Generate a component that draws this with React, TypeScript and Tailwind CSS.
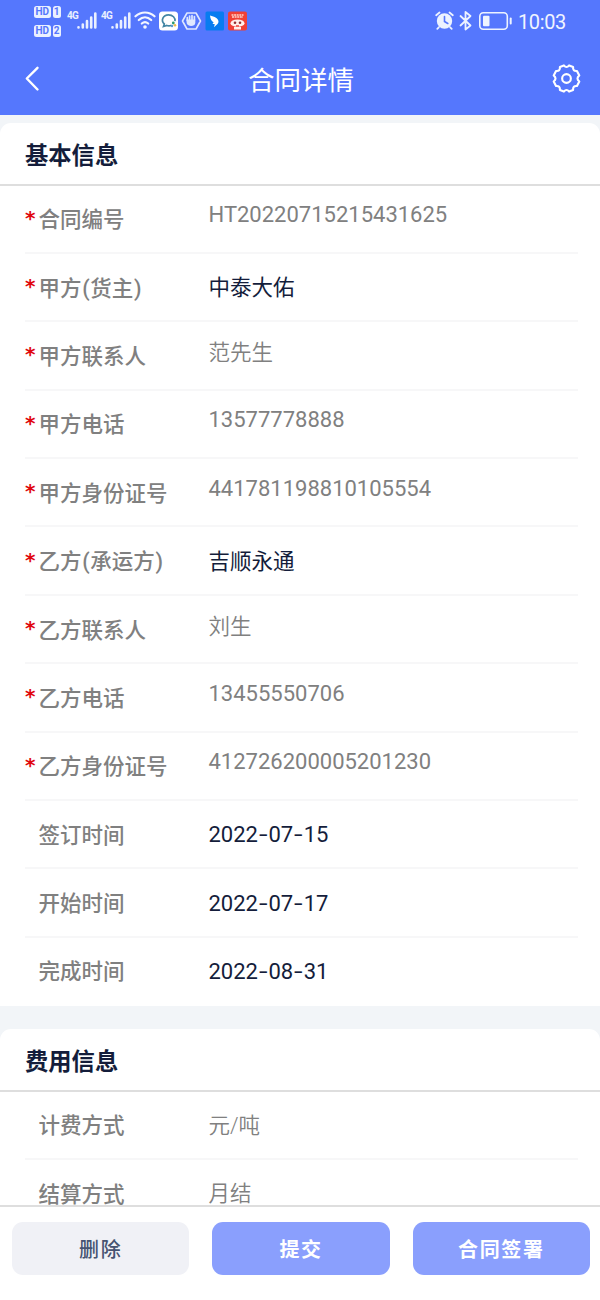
import React from 'react';

type Row = { label: string; value: string; required?: boolean; dark?: boolean; raised?: boolean };

const basicRows: Row[] = [
  { label: '合同编号', value: 'HT20220715215431625', required: true, raised: true },
  { label: '甲方(货主)', value: '中泰大佑', required: true, dark: true },
  { label: '甲方联系人', value: '范先生', required: true, raised: true },
  { label: '甲方电话', value: '13577778888', required: true, raised: true },
  { label: '甲方身份证号', value: '441781198810105554', required: true, raised: true },
  { label: '乙方(承运方)', value: '吉顺永通', required: true, dark: true },
  { label: '乙方联系人', value: '刘生', required: true, raised: true },
  { label: '乙方电话', value: '13455550706', required: true, raised: true },
  { label: '乙方身份证号', value: '412726200005201230', required: true, raised: true },
  { label: '签订时间', value: '2022-07-15', dark: true },
  { label: '开始时间', value: '2022-07-17', dark: true },
  { label: '完成时间', value: '2022-08-31', dark: true },
];

const feeRows: Row[] = [
  { label: '计费方式', value: '元/吨' },
  { label: '结算方式', value: '月结' },
];

function HdBadge({ n }: { n: string }) {
  return (
    <div className="flex h-[11.500px] gap-[2px] text-[10px] font-bold leading-[12px] text-[#5577fd]">
      <span className="w-[16.500px] rounded-[2.5px] bg-[#eaf0ff] text-center">HD</span>
      <span className="w-[8px] rounded-[2.5px] bg-[#eaf0ff] text-center">{n}</span>
    </div>
  );
}

function Signal() {
  return (
    <div className="flex w-[34px]">
      <span className="mt-[3px] w-[10px] text-[10px] font-bold leading-[10px] tracking-[-0.8px] text-[#eaf0ff]">4G</span>
      <svg width="20" height="18" viewBox="0 0 20 18" className="mt-[4px]" stroke="#eaf0ff" strokeWidth="2.600" strokeLinecap="round">
        <path d="M1.500 15.200v.3M5.800 12.500v3M10 9v6.500M14.200 5.500v10M18.300 1.500v14" />
      </svg>
    </div>
  );
}

function StatusBar() {
  return (
    <div className="flex h-[44px] shrink-0 pl-[34px] pr-[34px]">
      <div className="flex flex-col gap-[7.500px] pt-[6px]">
        <HdBadge n="1" />
        <HdBadge n="2" />
      </div>
      <div className="ml-[6.500px] flex pt-[8px]">
        <Signal />
        <Signal />
      </div>
      <svg width="114" height="24" viewBox="0 0 114 24" className="-ml-[1px] mt-[9px]" fill="none">
        <g stroke="#f3f6ff" strokeWidth="2.200" strokeLinecap="round">
          <path d="M1.500 7.300C7 2.200 15 2.200 20.500 7.300" />
          <path d="M4.800 11C8.500 7.600 13.500 7.600 17.200 11" />
          <path d="M7.800 14.500C9.800 12.800 12.200 12.800 14.200 14.500" />
        </g>
        <circle cx="11" cy="18" r="1.800" fill="#f3f6ff" />
        <rect x="25" y="2.500" width="19" height="19" rx="3.500" fill="#fff" />
        <path d="M37.500 16.300c-1.500.7-3.300.7-4.700.2L29.500 17.500l.8-2.500c-3.800-3.500-1.300-9.200 4.200-9.200 4.200 0 7 3 6.500 6.400" stroke="#4386a4" strokeWidth="1.700" />
        <circle cx="39.300" cy="14" r="1.400" fill="#2a9b70" />
        <circle cx="41" cy="16.300" r="1.300" fill="#f0b84a" />
        <circle cx="38" cy="17" r="1.200" fill="#5a9bd4" />
        <path d="M53 4h9l4.500 8-4.500 8h-9l-4.500-8z" stroke="#dfe8ff" strokeWidth="1.600" strokeLinejoin="round" />
        <path d="M53.300 11.500v-3M55.600 11V7M58 11V6.500M60.400 11V7.500" stroke="#dfe8ff" strokeWidth="1.700" strokeLinecap="round" />
        <path d="M52.500 10.500h8.800v3.200c0 4-7.300 4.500-8.600.5z" fill="#dfe8ff" />
        <rect x="71.500" y="2.500" width="18.500" height="19" rx="1.500" fill="#087cf0" />
        <path d="M76 6.500c4.500 1 8.500 2.800 8.500 6.300 0 1.600-1.800 3-4.400 5.400l.6-3.200-2.200-.1 1.100-1.700c-2.200-1-3.300-3.500-3.600-6.700z" fill="#fff" />
        <rect x="94" y="2.500" width="19" height="19" rx="2" fill="#ef4036" />
        <path d="M97.500 6h12M98 8.100h11" stroke="#ffd5cc" strokeWidth="1.500" strokeDasharray="2 .6" />
        <ellipse cx="103.500" cy="14.200" rx="7" ry="3.700" fill="#fff0ea" />
        <path d="M100 18h7v2.500h-7z" fill="#fff0ea" />
        <circle cx="101" cy="13.700" r="1.300" fill="#952f30" />
        <circle cx="106" cy="13.700" r="1.300" fill="#952f30" />
        <path d="M102 17h3" stroke="#ef4036" strokeWidth="1.500" />
      </svg>
      <svg width="78" height="24" viewBox="0 0 78 24" className="ml-auto mt-[9px]" fill="none">
        <circle cx="9.500" cy="12" r="7.700" fill="#edf3ff" />
        <path d="M9.500 7.500v5l3.300 2" stroke="#5577fd" strokeWidth="1.600" strokeLinecap="round" />
        <path d="M1.200 6.200L4.500 3.500M17.800 6.200l-3.300-2.700M3.800 18.300l-1.500 1.500M15.200 18.300l1.500 1.500" stroke="#edf3ff" strokeWidth="1.800" strokeLinecap="round" />
        <path d="M25.500 7l10 9.500-5 4V3l5 4-10 9.500" stroke="#edf3ff" strokeWidth="1.800" strokeLinejoin="round" strokeLinecap="round" />
        <rect x="44.800" y="3.800" width="27.500" height="16.500" rx="3.500" stroke="#edf3ff" strokeWidth="1.600" />
        <rect x="48" y="6.800" width="6.500" height="10.500" rx="1" fill="#edf3ff" />
        <path d="M75.700 9.500v5" stroke="#edf3ff" strokeWidth="2" strokeLinecap="round" />
      </svg>
      <span className="ml-[5px] mt-[10px] text-[20px] leading-[24px] tracking-[-0.35px] text-[#f0f4ff]">10:03</span>
    </div>
  );
}

function Value({ text }: { text: string }) {
  if (!/^[HT\d-]+$/.test(text)) return <>{text}</>;
  return (
    <span className="text-[22px] font-normal">
      {text.split(/(-)/).map((part, i) =>
        part === '-' ? (
          <span key={i} className="inline-block w-[10.500px] scale-x-140 text-center">
            -
          </span>
        ) : (
          part
        ),
      )}
    </span>
  );
}

function InfoRow({ row }: { row: Row }) {
  return (
    <div className="ml-[25px] mr-[22px] flex h-[68.400px] items-center border-b-2 border-[#f7f7f8] last:border-transparent">
      <span className="w-[13.500px] pb-[2px] font-['DejaVu_Sans'] text-[20px] font-bold leading-none text-[#e0060d]">{row.required ? '*' : ''}</span>
      <span className="w-[170px] whitespace-nowrap pt-[3px] text-[21.500px] font-medium leading-[22px] text-[#808080]">
        {row.label.split(/([()])/).map((part, i) =>
          part === '(' || part === ')' ? (
            <span key={i} className="px-[0.700px]">
              {part}
            </span>
          ) : (
            part
          ),
        )}
      </span>
      <span
        className={
          'whitespace-nowrap text-[21.500px] leading-[22px] ' +
          (row.dark ? 'pt-[2px] text-[#141d3b]' : 'font-[350] text-[#808080] ' + (row.raised ? (/\d/.test(row.value) ? 'pb-[7px]' : 'pb-[4px]') : 'pt-[2px]'))
        }
      >
        <Value text={row.value} />
      </span>
    </div>
  );
}

function Section({ title, rows }: { title: string; rows: Row[] }) {
  return (
    <section className="shrink-0 rounded-t-[11px] bg-white">
      <h2 className="flex h-[62.500px] items-center border-b-2 border-[#dedede] pl-[25px] pt-[6px] text-[23.300px] font-bold text-[#141d3b]">{title}</h2>
      <div>
        {rows.map((row) => (
          <InfoRow key={row.label} row={row} />
        ))}
      </div>
    </section>
  );
}

export default function App() {
  return (
    <div className="flex h-[1300px] w-[600px] flex-col overflow-hidden bg-[#f2f5f8] font-[Roboto,'Noto_Sans_CJK_SC',sans-serif]">
      <header className="flex h-[115px] shrink-0 flex-col bg-[#5577fd]">
        <StatusBar />
        <div className="flex h-[70px] items-center justify-between pl-[25px] pr-[18px]">
          <svg width="26" height="26" viewBox="0 0 26 26" fill="none" stroke="#fff" strokeWidth="2.400" strokeLinecap="round" strokeLinejoin="round">
            <path d="M12.500 1.800L1.800 12.500l10.700 11" />
          </svg>
          <h1 className="pt-[4px] text-[26.500px] leading-[40px] text-white">合同详情</h1>
          <svg width="31" height="31" viewBox="0 0 32 32" className="-mt-px" fill="none" stroke="#fff" strokeWidth="2.200" strokeLinejoin="round">
            <path d="M13.300 2.500 Q16 5.800 18.700 2.500 L22.800 4.200 Q22.400 8.700 26.800 8.200 L29.200 12.900 Q25.500 16 29.200 19.100 L26.800 23.800 Q22.400 23.300 22.800 27.800 L18.700 29.500 Q16 26.200 13.300 29.500 L9.200 27.800 Q9.600 23.300 5.200 23.800 L2.800 19.100 Q6.500 16 2.800 12.900 L5.200 8.200 Q9.600 8.700 9.200 4.200 Z" />
            <circle cx="16" cy="16" r="4.500" />
          </svg>
        </div>
      </header>
      <main className="flex min-h-0 flex-1 flex-col gap-[23px] overflow-hidden pt-[8px]">
        <Section title="基本信息" rows={basicRows} />
        <Section title="费用信息" rows={feeRows} />
      </main>
      <footer className="flex h-[95px] shrink-0 gap-[23px] border-t-2 border-[#dedede] bg-white pl-[12px] pr-[10px] pt-[14.500px] text-[20px] font-bold tracking-[1.600px] text-white">
        <button className="h-[53.500px] flex-1 rounded-[11px] bg-[#f0f1f6] pt-[3px] font-medium text-[#465371]">删除</button>
        <button className="h-[53.500px] flex-1 rounded-[11px] bg-[#8a9ffd] pt-[3px]">提交</button>
        <button className="h-[53.500px] flex-1 rounded-[11px] bg-[#8a9ffd] pt-[3px]">合同签署</button>
      </footer>
    </div>
  );
}
